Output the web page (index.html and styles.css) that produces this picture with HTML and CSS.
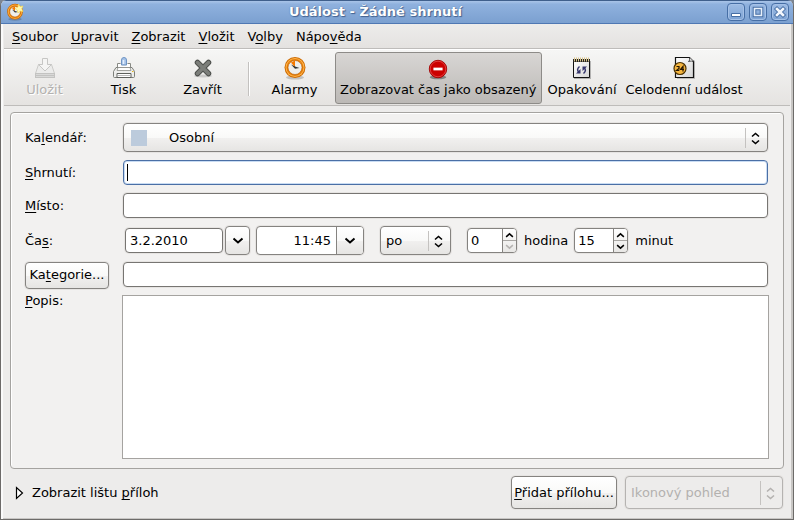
FILE: index.html
```html
<!DOCTYPE html>
<html lang="cs">
<head>
<meta charset="utf-8">
<title>Událost - Žádné shrnutí</title>
<link rel="stylesheet" href="styles.css">
</head>
<body>
<svg class="defs" aria-hidden="true">
  <defs>
    <linearGradient id="paper" x2="1" y2="1"><stop stop-color="#fff"/><stop offset="1" stop-color="#d5d5d5"/></linearGradient>
    <symbol id="updown" viewBox="0 0 9 13"><path d="M1 4.5 4.5 1.5 8 4.5M1 8.5 4.5 11.5 8 8.5" fill="none" stroke="currentColor" stroke-width="1.6"/></symbol>
    <symbol id="down" viewBox="0 0 12 8"><path d="M1.5 1.5 6 5.5 10.5 1.5" fill="none" stroke="currentColor" stroke-width="2"/></symbol>
    <symbol id="clock" viewBox="0 0 24 24">
      <ellipse cx="12" cy="21.500" rx="9" ry="2" fill="#000" opacity=".18"/>
      <circle cx="12" cy="11.500" r="10.500" fill="#ce6b00"/>
      <circle cx="12" cy="11.500" r="9.500" fill="#ffb64d"/>
      <circle cx="12" cy="11.500" r="8.500" fill="#e67d0a"/>
      <circle cx="12" cy="11.500" r="7" fill="#eeeeec" stroke="#b65d00" stroke-width=".6"/>
      <path d="M12 11.500 8 6.500 12 4.500z" fill="#f57900"/>
      <path d="M8 8.500 12 10.500l4.500 1.500-4.500.8z" fill="#2e3436"/>
    </symbol>
  </defs>
</svg>
<div class="window">
  <header class="titlebar">
    <svg class="app-icon" viewBox="0 0 18 18" aria-hidden="true"><use href="#clock" width="18" height="18"/><path d="m12.500 1 1.500 2.500 3-.5-1.300 2.700L17 8.500l-3-.5-2 2-.7-3L9 5.500l3-1.500z" fill="#fff8b0" stroke="#f6d94a" stroke-width=".6"/></svg>
    <h1>Událost - Žádné shrnutí</h1>
    <div class="window-buttons">
      <button aria-label="Minimalizovat"><svg viewBox="0 0 18 18"><path d="M4.500 10.500h9v3h-9z" fill="#fff" stroke="#466ea5"/></svg></button>
      <button aria-label="Maximalizovat"><svg viewBox="0 0 18 18"><path d="M5.500 5.500h7v7h-7z" fill="none" stroke="#466ea5" stroke-width="3.600"/><path d="M5.500 5.500h7v7h-7z" fill="none" stroke="#e8f0fa" stroke-width="1.600"/></svg></button>
      <button aria-label="Zavřít okno"><svg viewBox="0 0 18 18"><path d="m6 6 6 6m0-6-6 6" stroke="#466ea5" stroke-width="4.400" stroke-linecap="square"/><path d="m6 6 6 6m0-6-6 6" stroke="#f2f6fc" stroke-width="2.600" stroke-linecap="square"/></svg></button>
    </div>
  </header>

  <nav class="menubar">
    <button><u>S</u>oubor</button><button><u>U</u>pravit</button><button><u>Z</u>obrazit</button><button><u>V</u>ložit</button><button>V<u>o</u>lby</button><button>Nápo<u>v</u>ěda</button>
  </nav>

  <div class="toolbar">
    <button class="tool" disabled>
      <svg viewBox="0 0 24 24"><path d="M5.500 8.500h13l3 9h-19z" fill="#ececeb" stroke="#cbcbc9"/><path d="M2 17h20v5H2z" fill="#c3c3c1"/><path d="M3 18.500h18M3 20.500h18" stroke="#d9d9d8"/><path d="M9.500 2.500h5v6h4L12 15 5.500 8.500h4z" fill="#f5f5f4" stroke="#c6c6c4"/></svg>
      <span>Uložit</span>
    </button>
    <button class="tool">
      <svg viewBox="0 0 24 24"><path d="M9.500 9V4a2.500 2.500 0 0 1 5 0v5z" fill="#a8c4e8" stroke="#6f94c4"/><path d="M11.500 4v4" stroke="#e4efff" stroke-width="1.500"/><path d="M5.500 7.500h3M15.500 7.500h3v5h-13v-5" fill="none" stroke="#888a85"/><path d="M6 8h3v2h6V8h3v5H6z" fill="#fff"/><path d="M4 11.500h16l2.500 4v5q0 1-1 1h-19q-1 0-1-1v-5z" fill="#eeeeec" stroke="#7d7f7a"/><path d="M6 11.500h12l1 3H5z" fill="#fff" stroke="#8b8d88" stroke-width=".8"/><path d="M5 17.500h14v4H5z" fill="#fff" stroke="#5e605c"/><path d="M6 19.500h12" stroke="#bbb"/><path d="M20 15.500h1.500" stroke="#e2b619"/></svg>
      <span>Tisk</span>
    </button>
    <button class="tool">
      <svg viewBox="0 0 24 24"><ellipse cx="12" cy="20" rx="9" ry="1.500" opacity=".15"/><path d="m6.500 6.500 11 11m0-11-11 11" stroke="#4e504d" stroke-width="5.500" stroke-linecap="round"/><path d="m6.500 6.500 11 11m0-11-11 11" stroke="#7c7e7a" stroke-width="3.500" stroke-linecap="round"/></svg>
      <span>Zavřít</span>
    </button>
    <hr class="tool-separator">
    <button class="tool">
      <svg viewBox="0 0 24 24"><use href="#clock" width="24" height="24"/></svg>
      <span>Alarmy</span>
    </button>
    <button class="tool pressed" aria-pressed="true">
      <svg viewBox="0 0 24 24"><ellipse cx="12" cy="21" rx="9" ry="2.200" opacity=".35"/><circle cx="12" cy="12" r="9.500" fill="#cc0000" stroke="#a00000"/><circle cx="12" cy="12" r="8.500" fill="none" stroke="#e34242"/><path d="M7 10.500h10v3H7z" fill="#fff"/></svg>
      <span>Zobrazovat čas jako obsazený</span>
    </button>
    <button class="tool">
      <svg viewBox="0 0 24 24"><path d="M4 5h17v18H4z" opacity=".25"/><path d="M3.500 3.500h16v18h-16z" fill="url(#paper)" stroke="#111" stroke-linejoin="round"/><path d="M3 3h17v3H3z" fill="#222"/><path d="M4.500 1.500v4m2-4v4m2-4v4m2-4v4m2-4v4m2-4v4m2-4v4m2-4v4" stroke="#d8c48c"/><path d="M9.500 10.500q-3.500 3-.5 6M13.500 17.500q3.500-3 .5-6" fill="none" stroke="#34346b" stroke-width="1.500"/><path d="M6 17.500h4.500V13zM17 10.500h-4.500V15z" fill="#34346b"/></svg>
      <span>Opakování</span>
    </button>
    <button class="tool">
      <svg viewBox="0 0 24 24"><path d="M5 4h17l1 1v18H5z" opacity=".2"/><path d="M3.500 1.500h14l4 4v16h-18z" fill="url(#paper)" stroke="#111" stroke-width="1.200"/><path d="M17.500 1.500q1 3-1 4 3-1 5 0" fill="#fff" stroke="#222" stroke-width=".8"/><circle cx="8" cy="12.500" r="6" fill="#f4b53f" stroke="#4a3000" stroke-width="1.200"/><path d="M4.500 10.500h2.500v2l-2.500 2h2.800M11 15.500v-5l-2.500 3h3.500" fill="none" stroke="#241500" stroke-width="1.200"/></svg>
      <span>Celodenní událost</span>
    </button>
  </div>

  <main>
    <form class="panel">
      <label for="calendar">Ka<u>l</u>endář:</label>
      <div class="combo calendar">
        <select id="calendar"><option>Osobní</option></select>
        <span class="swatch"></span>
        <span class="arrows"><svg><use href="#updown"/></svg></span>
      </div>

      <label for="summary"><u>S</u>hrnutí:</label>
      <input class="entry focused" id="summary" type="text">

      <label for="place"><u>M</u>ísto:</label>
      <input class="entry" id="place" type="text">

      <label for="date">Ča<u>s</u>:</label>
      <div class="time-row">
        <input class="entry date" id="date" type="text" value="3.2.2010">
        <button type="button" class="drop" aria-label="Vybrat datum"><svg><use href="#down"/></svg></button>
        <div class="time-combo">
          <input type="text" value="11:45" aria-label="Čas začátku">
          <button type="button" aria-label="Vybrat čas"><svg><use href="#down"/></svg></button>
        </div>
        <div class="combo mode">
          <select aria-label="Trvání"><option>po</option></select>
          <span class="arrows"><svg><use href="#updown"/></svg></span>
        </div>
        <div class="spin">
          <input id="hours" type="number" value="0">
          <div class="steps"><button type="button" aria-label="Více hodin"><svg class="up"><use href="#down"/></svg></button><button type="button" disabled aria-label="Méně hodin"><svg><use href="#down"/></svg></button></div>
        </div>
        <label for="hours">hodina</label>
        <div class="spin wide">
          <input id="minutes" type="number" value="15">
          <div class="steps"><button type="button" aria-label="Více minut"><svg class="up"><use href="#down"/></svg></button><button type="button" aria-label="Méně minut"><svg><use href="#down"/></svg></button></div>
        </div>
        <label for="minutes">minut</label>
      </div>

      <button type="button" class="push">Ka<u>t</u>egorie...</button>
      <input class="entry" type="text" aria-label="Kategorie">

      <label class="top" for="description"><u>P</u>opis:</label>
      <textarea id="description"></textarea>
    </form>
  </main>

  <footer>
    <button class="expander"><svg viewBox="0 0 9 14"><path d="M1.500 1.500v11l6-5.500z" fill="#fff" stroke="#000" stroke-width="1.200"/></svg><span>Zobrazit lištu <u>p</u>říloh</span></button>
    <button class="push attach"><u>P</u>řidat přílohu...</button>
    <div class="combo view">
      <select disabled aria-label="Pohled"><option>Ikonový pohled</option></select>
      <span class="arrows"><svg><use href="#updown"/></svg></span>
    </div>
  </footer>
</div>
</body>
</html>
```

FILE: styles.css
```css
* { box-sizing: border-box; }

body {
  margin: 0;
  background: #7c8694;
  font: 13px/16px "DejaVu Sans", sans-serif;
  color: #000;
}

button, input, select, textarea { font: inherit; color: inherit; margin: 0; }
button { background: none; border: 0; padding: 0; white-space: nowrap; }
svg { display: block; }
u { text-underline-offset: 2px; text-decoration-thickness: 1px; text-decoration-skip-ink: none; }
.defs { position: absolute; width: 0; height: 0; }

.window {
  display: flex;
  flex-direction: column;
  min-height: 100vh;
  background: #edeceb;
  border: 1px solid #6d6b69;
  border-top: 0;
  border-radius: 6px 6px 0 0;
  box-shadow: inset 2px 0 #fafafa, inset -2px -1px #c8c6c4;
  overflow: hidden;
}

.titlebar {
  display: grid;
  grid-template-columns: 20px 1fr 64px;
  align-items: center;
  height: 24px;
  padding: 0 4px 0 5px;
  border-top: 1px solid #3f5f8c;
  border-bottom: 1px solid #4f78b3;
  background: linear-gradient(#a9c4e8, #8fb1de 15%, #7ba0d0);
}
.titlebar h1 {
  margin: 0;
  font-size: 13px;
  text-align: center;
  color: #fff;
  text-shadow: 1px 1px 1px #42618f, 0 0 1px #42618f;
}
.app-icon { width: 18px; height: 18px; }
.window-buttons { display: flex; gap: 4px; justify-content: flex-end; }
.window-buttons button {
  width: 18px;
  height: 18px;
  border: 1px solid #466ea5;
  border-radius: 4px;
  background: linear-gradient(#9dbbe4, #7ea3d4);
  box-shadow: inset 0 0 0 1px #a5c1e7;
}
.window-buttons svg { width: 18px; height: 18px; margin: -1px; }

.menubar {
  display: flex;
  gap: 13px;
  height: 25px;
  padding: 1px 8px 0;
  margin: 0 3px;
  border-bottom: 1px solid #bebcba;
  background: linear-gradient(#edeceb, #e4e2e0);
}

.toolbar {
  display: flex;
  height: 57px;
  margin: 0 3px;
  padding: 3px 1px 2px;
  border-top: 1px solid #fff;
  border-bottom: 1px solid #bebcba;
  background: linear-gradient(#f6f6f5, #e5e3e1);
}
.tool {
  display: flex;
  flex-direction: column;
  align-items: center;
  gap: 2px;
  min-width: 79px;
  padding: 3px 4px 5px;
}
.tool svg { width: 24px; height: 24px; }
.tool:disabled { color: #b3b1af; text-shadow: 1px 1px #fff; }
.tool.pressed {
  margin: -1px 1px;
  padding: 5px 4px;
  border: 1px solid #8d8b88;
  border-radius: 3px;
  background: linear-gradient(#d8d6d4, #bcb9b6);
}
.tool-separator {
  width: 2px;
  margin: 9px 5px 7px 6px;
  border: 0;
  border-left: 1px solid #c3c1bf;
  background: #fff;
}

main { display: flex; flex: 1; padding: 6px 9px 0; }
.panel {
  display: grid;
  flex: 1;
  grid-template-columns: 84px 1fr;
  grid-template-rows: 30px 26px 26px 29px 26px minmax(80px, 1fr);
  gap: 7px 13px;
  align-items: center;
  padding: 10px 14px 9px;
  border: 1px solid #a5a3a0;
  border-radius: 4px;
  background: #f2f1f0;
  box-shadow: inset 1px 1px #fff;
}
.panel label.top { align-self: start; margin-top: -2px; }
.panel > .entry, .panel > .combo { margin: 0 1px 1px; }

.entry, .combo, .drop, .time-combo, .spin, .push {
  border: 1px solid #858380;
  border-radius: 4px;
  box-shadow: 0 0 0 1px #e6e4e2;
}
.entry {
  height: 25px;
  min-width: 0;
  padding: 0 5px;
  background: #fff;
  border-color: #777572;
  outline: 0;
}
.entry.focused {
  border-color: #4b6fa5;
  box-shadow: inset 0 0 0 1px #c9dcf3;
  background: linear-gradient(#000, #000) 3px 3px / 1px 17px no-repeat #fff;
}

.combo, .push, .drop, .time-combo button {
  background: linear-gradient(#fff, #f9f9f8 50%, #f1f0ef 52%, #e6e5e3);
}
.combo { display: grid; grid-template-columns: 1fr 22px; height: 29px; }
.combo > * { grid-row: 1; }
.combo select {
  grid-column: 1 / 3;
  width: 100%;
  padding: 0 26px 0 5px;
  border: 0;
  background: none;
  appearance: none;
  opacity: 1;
}
.combo.calendar select { padding-left: 45px; }
.swatch { grid-column: 1; align-self: center; width: 16px; height: 16px; margin-left: 7px; background: #bccbdc; pointer-events: none; }
.arrows {
  display: grid;
  grid-column: 2;
  place-items: center;
  margin: 4px 0 3px;
  padding-right: 2px;
  border-left: 1px solid #c4c2c0;
  pointer-events: none;
}
.arrows svg { width: 9px; height: 13px; }

.time-row { display: flex; align-items: center; padding-left: 3px; }
.date { width: 98px; padding: 0 4px; }
.drop { width: 25px; height: 29px; margin: 0 6px 0 2px; }
.drop svg, .time-combo svg { width: 12px; height: 8px; margin: auto; }
.time-combo { display: flex; width: 108px; height: 29px; margin-right: 16px; background: #fff; overflow: hidden; }
.time-combo input { flex: 1; width: 0; padding: 0 5px; border: 0; background: none; text-align: right; }
.time-combo button { width: 27px; border-left: 1px solid #858380; }
.mode { width: 71px; margin-right: 16px; }
.spin { display: flex; width: 50px; height: 25px; margin-right: 7px; background: #fff; overflow: hidden; }
.spin.wide { width: 54px; margin-left: 6px; }
.spin input { flex: 1; width: 0; padding: 0 3px; border: 0; background: none; appearance: textfield; }
.spin input::-webkit-inner-spin-button { appearance: none; margin: 0; }
.steps { display: flex; flex-direction: column; width: 14px; border-left: 1px solid #858380; background: linear-gradient(#fff, #e8e7e5); }
.steps button { flex: 1; }
.steps button + button { border-top: 1px solid #a9a7a4; }
.steps button:disabled { color: #b5b3b1; }
.steps svg { width: 9px; height: 6px; margin: auto; }
.steps .up { transform: rotate(180deg); }

.push { height: 27px; }
.panel .push { justify-self: end; width: 84px; }
textarea {
  display: block;
  width: 100%;
  height: 100%;
  border: 1px solid #a5a3a0;
  background: #fff;
  resize: none;
}

footer { display: flex; align-items: center; gap: 8px; padding: 7px 10px 10px 14px; }
.expander { display: flex; align-items: center; gap: 8px; margin-right: auto; }
.expander svg { width: 9px; height: 14px; }
.attach { width: 106px; height: 33px; }
.view { width: 158px; height: 33px; border-color: #b5b3b1; background: #edeceb; color: #b3b1af; text-shadow: 1px 1px #fff; }
.view select:disabled { color: #b3b1af; }
```
